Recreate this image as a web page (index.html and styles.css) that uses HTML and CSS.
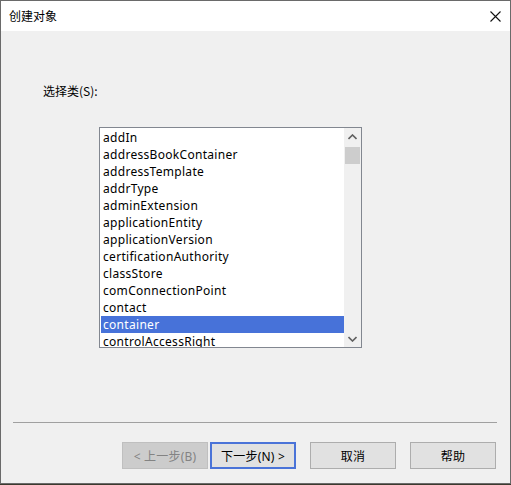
FILE: index.html
```
<!DOCTYPE html>
<html>
<head>
    <meta charset="UTF-8">
    <title>创建对象</title>
    <link rel="stylesheet" href="styles.css">
</head>
<body>
<div class="window">

    <div class="titlebar">
        <span class="title">创建对象</span>
        <span class="close">
            <svg width="11" height="11" viewBox="0 0 11 11">
                <path d="M0.5 0.5 L10.5 10.5 M10.5 0.5 L0.5 10.5" stroke="#111" stroke-width="1.1" fill="none"/>
            </svg>
        </span>
    </div>

    <div class="content">
        <p class="label">选择类(S):</p>

        <div class="listbox">
            <ul class="items">
                <li>addIn</li>
                <li>addressBookContainer</li>
                <li>addressTemplate</li>
                <li>addrType</li>
                <li>adminExtension</li>
                <li>applicationEntity</li>
                <li>applicationVersion</li>
                <li>certificationAuthority</li>
                <li>classStore</li>
                <li>comConnectionPoint</li>
                <li>contact</li>
                <li class="on">container</li>
                <li>controlAccessRight</li>
            </ul>
            <div class="scrollbar">
                <span class="arrow">
                    <svg width="9" height="6" viewBox="0 0 9 6"><path d="M0.5 5 L4.5 1 L8.5 5" stroke="#606060" stroke-width="1.6" fill="none"/></svg>
                </span>
                <span class="thumb"></span>
                <span class="track"></span>
                <span class="arrow">
                    <svg width="9" height="6" viewBox="0 0 9 6"><path d="M0.5 1 L4.5 5 L8.5 1" stroke="#606060" stroke-width="1.6" fill="none"/></svg>
                </span>
            </div>
        </div>

        <div class="separator"></div>

        <div class="buttons">
            <div class="btn disabled">&lt; 上一步(B)</div>
            <div class="btn default">下一步(N) &gt;</div>
            <div class="btn">取消</div>
            <div class="btn">帮助</div>
        </div>
    </div>

</div>
</body>
</html>
```

FILE: styles.css
```
body{
    margin: 0;
    background-color: #3b3a2e;
    font-family: "Segoe UI","Noto Sans","Noto Sans CJK SC",sans-serif;
    font-size: 12px;
    color: #000;
}
p,ul,li{margin:0;padding:0;list-style:none;}

.window{
    box-sizing: border-box;
    width: 511px;
    height: 484px;
    border: 1px solid #6a6a6a;
    background-color: #f0f0f0;
    display: flex;
    flex-direction: column;
}

/* title bar */
.titlebar{
    height: 30px;
    background-color: #fff;
    display: flex;
    align-items: center;
    justify-content: space-between;
    padding: 0 9px 0 8px;
    flex-shrink: 0;
}
.titlebar .title{
    font-family: "Noto Sans CJK SC",sans-serif;
    font-size: 12px;
    line-height: 16px;
}
.titlebar .close{
    display: flex;
    width: 11px;
    height: 11px;
}

.content{
    flex: 1;
    display: flex;
    flex-direction: column;
}

.label{
    margin: 51px 0 0 42px;
    line-height: 17px;
    font-family: "Noto Sans CJK SC",sans-serif;
}

/* class list */
.listbox{
    box-sizing: border-box;
    width: 263px;
    height: 221px;
    margin: 28px 0 0 98px;
    border: 1px solid #828790;
    background-color: #fff;
    display: flex;
    overflow: hidden;
}
.listbox .items{
    flex: 1;
    padding: 1px 0 0 1px;
    overflow: hidden;
}
.listbox .items li{
    height: 17px;
    line-height: 17px;
    padding-left: 2px;
    letter-spacing: 0.3px;
    white-space: nowrap;
}
.listbox .items li.on{
    background-color: #4772d9;
    color: #fff;
}
.scrollbar{
    width: 17px;
    background-color: #f0f0f0;
    display: flex;
    flex-direction: column;
}
.scrollbar .arrow{
    height: 17px;
    display: flex;
    align-items: center;
    justify-content: center;
}
.scrollbar .thumb{
    height: 17px;
    margin: 2px 1px 0;
    background-color: #cdcdcd;
}
.scrollbar .track{
    flex: 1;
}

.separator{
    height: 1px;
    margin: 74px 13px 0 12px;
    background-color: #a0a0a0;
}

/* dialog buttons */
.buttons{
    display: flex;
    justify-content: flex-end;
    margin: 19px 14px 0 0;
}
.btn{
    box-sizing: border-box;
    width: 86px;
    height: 27px;
    margin-left: 14px;
    border: 1px solid #adadad;
    background-color: #e1e1e1;
    display: flex;
    align-items: center;
    justify-content: center;
    font-family: "Segoe UI","Noto Sans","Noto Sans CJK SC",sans-serif;
    letter-spacing: 0.2px;
}
.btn.disabled{
    margin-left: 0;
    border-color: #bfbfbf;
    background-color: #cccccc;
    color: #838383;
}
.btn.default{
    margin-left: 2px;
    border: 2px solid #4a73d8;
}
```
